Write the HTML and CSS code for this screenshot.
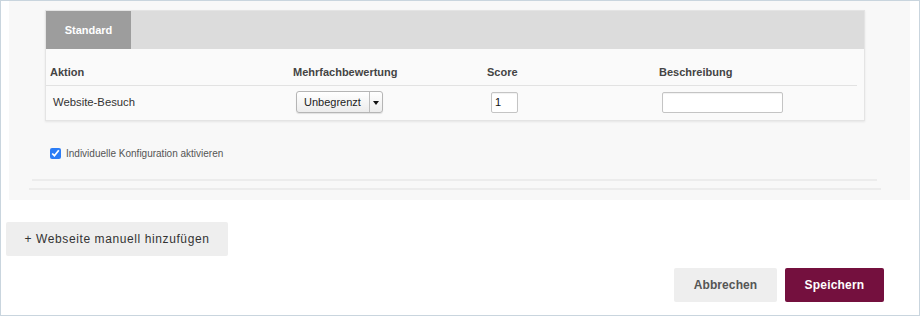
FILE: index.html
```html
<!DOCTYPE html>
<html lang="de">
    <head>
        <meta charset="UTF-8">
        <title>Scoring</title>
        <link rel="stylesheet" href="styles.css">
    </head>
    <body>
        <div class="frame">
            <div class="panel">
                <div class="card">
                    <div class="tabs">
                        <div class="tab">Standard</div>
                    </div>
                    <div class="row head">
                        <div>Aktion</div>
                        <div>Mehrfachbewertung</div>
                        <div>Score</div>
                        <div>Beschreibung</div>
                    </div>
                    <div class="row">
                        <div class="name">Website-Besuch</div>
                        <div>
                            <span class="select">
                                <span class="select-value">Unbegrenzt</span>
                                <span class="select-arrow"></span>
                            </span>
                        </div>
                        <div><input class="score" type="text" value="1"></div>
                        <div><input class="desc" type="text" value=""></div>
                    </div>
                </div>
                <label class="check">
                    <input type="checkbox" checked>
                    <span>Individuelle Konfiguration aktivieren</span>
                </label>
                <div class="line first"></div>
                <div class="line second"></div>
            </div>
            <button class="btn add">+ Webseite manuell hinzufügen</button>
            <div class="actions">
                <button class="btn cancel">Abbrechen</button>
                <button class="btn save">Speichern</button>
            </div>
        </div>
    </body>
</html>
```

FILE: styles.css
```css
*{
    margin: 0;
    padding: 0;
    box-sizing: border-box;
}
body{
    font-family: "Liberation Sans", Arial, sans-serif;
    color: #333;
    background: #fff;
}
.frame{
    width: 920px;
    height: 316px;
    border: 1px solid #c9d5de;
}
.panel{
    width: 901px;
    height: 199px;
    margin-left: 8px;
    padding: 9px 0 0 36px;
    background: #f8f8f8;
}
.card{
    width: 820px;
    height: 111px;
    background: #fafafa;
    border: 1px solid #e4e4e4;
    box-shadow: 0 1px 2px rgba(0,0,0,0.08);
}
.tabs{
    height: 38px;
    background: #dcdcdc;
    display: flex;
}
.tab{
    width: 85px;
    background: #9d9d9d;
    color: #fff;
    font-size: 11px;
    font-weight: bold;
    display: flex;
    align-items: center;
    justify-content: center;
}
.row{
    width: 811px;
    display: grid;
    grid-template-columns: 243px 194px 172px 1fr;
    align-items: center;
    padding-left: 4px;
    font-size: 11px;
}
.row.head{
    height: 37px;
    align-items: end;
    padding-bottom: 7px;
    font-weight: bold;
    color: #444;
    border-bottom: 1px solid #e2e2e2;
}
.row:not(.head){
    height: 32px;
}
.name{
    padding-left: 3px;
    font-size: 11.3px;
}
.select{
    display: inline-flex;
    margin-left: 3px;
    height: 22px;
    border: 1px solid #b5b5b5;
    border-radius: 3px;
    background: linear-gradient(#fff, #ececec);
    box-shadow: 0 1px 1px rgba(0,0,0,0.1);
}
.select-value{
    width: 72px;
    line-height: 20px;
    padding-left: 7px;
    font-size: 11px;
    color: #222;
}
.select-arrow{
    width: 13px;
    border-left: 1px solid #bdbdbd;
    position: relative;
}
.select-arrow::after{
    content: '';
    position: absolute;
    left: 3px;
    top: 9px;
    border-left: 3px solid transparent;
    border-right: 3px solid transparent;
    border-top: 4px solid #111;
}
input[type=text]{
    height: 21px;
    border: 1px solid #c4c4c4;
    border-radius: 2px;
    background: #fff;
    font-family: inherit;
    font-size: 11px;
    padding: 0 3px;
    color: #111;
    box-shadow: inset 0 1px 1px rgba(0,0,0,0.06);
}
.score{
    width: 27px;
    margin-left: 4px;
}
.desc{
    width: 121px;
    margin-left: 3px;
}
.check{
    display: flex;
    align-items: center;
    gap: 5px;
    margin: 27px 0 0 5px;
    font-size: 10px;
    color: #555;
}
.check input{
    width: 11px;
    height: 11px;
    accent-color: #2b7df6;
}
.line{
    height: 2px;
    background: #ececec;
}
.line.first{
    width: 845px;
    margin: 20px 0 0 -13px;
}
.line.second{
    width: 852px;
    margin: 7px 0 0 -16px;
}
.btn{
    border: none;
    font-family: inherit;
    cursor: pointer;
}
.add{
    display: block;
    width: 222px;
    height: 34px;
    margin: 22px 0 0 5px;
    background: #eee;
    border-radius: 2px;
    font-size: 12px;
    letter-spacing: 0.6px;
    color: #333;
}
.actions{
    display: flex;
    justify-content: flex-end;
    gap: 8px;
    margin: 12px 35px 0 0;
}
.cancel{
    width: 103px;
    height: 34px;
    background: #eee;
    border-radius: 2px;
    font-size: 12px;
    font-weight: bold;
    letter-spacing: 0.1px;
    color: #555;
}
.save{
    width: 99px;
    height: 34px;
    background: #74103e;
    border-radius: 2px;
    font-size: 12px;
    font-weight: bold;
    letter-spacing: 0.2px;
    color: #fff;
}
```
